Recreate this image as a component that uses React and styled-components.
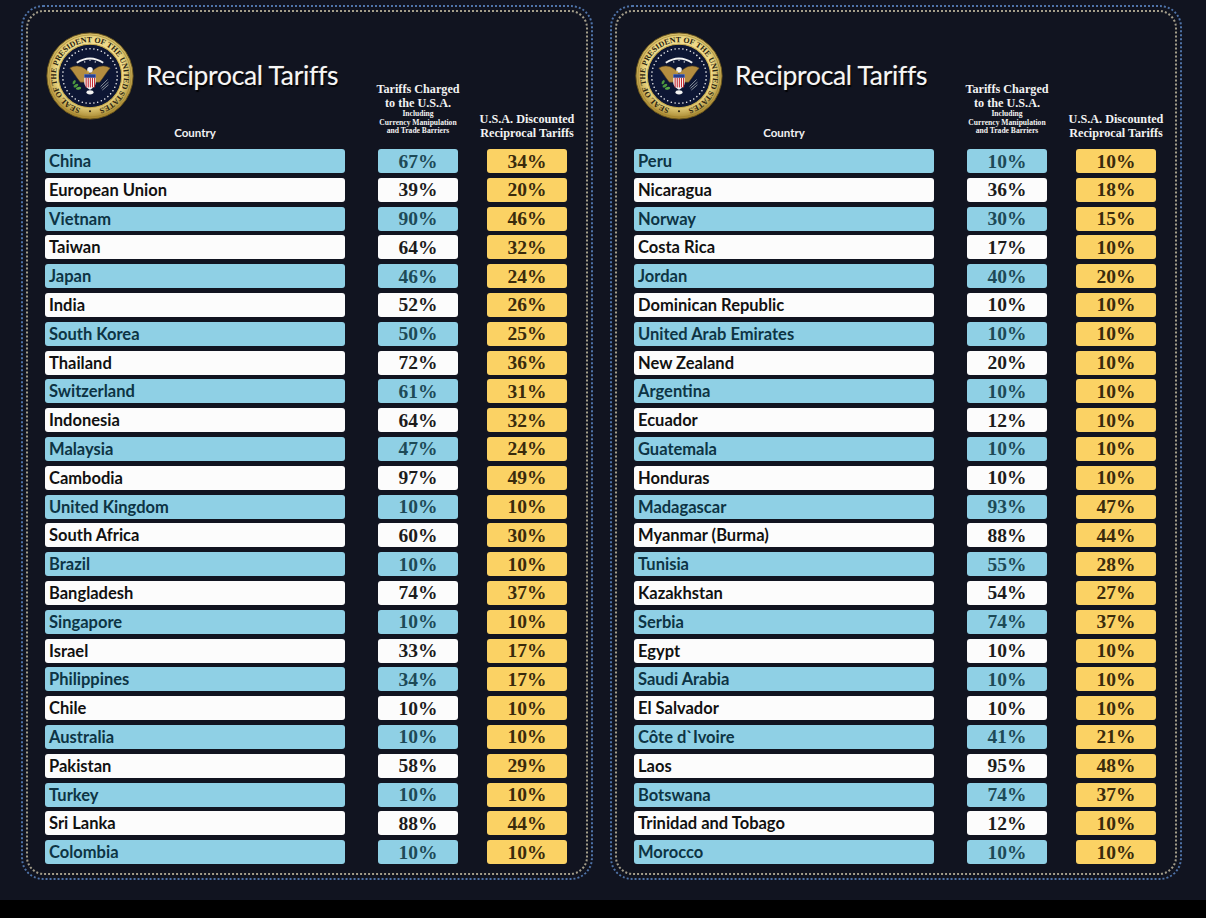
import styled, { createGlobalStyle } from "styled-components";

const GlobalStyle = createGlobalStyle`
    html, body {
        margin: 0;
        padding: 0;
        background: #000;
    }
    #root {
        width: 1206px;
        height: 918px;
    }
`;

const LEFT = [
    ["China", 67, 34],
    ["European Union", 39, 20],
    ["Vietnam", 90, 46],
    ["Taiwan", 64, 32],
    ["Japan", 46, 24],
    ["India", 52, 26],
    ["South Korea", 50, 25],
    ["Thailand", 72, 36],
    ["Switzerland", 61, 31],
    ["Indonesia", 64, 32],
    ["Malaysia", 47, 24],
    ["Cambodia", 97, 49],
    ["United Kingdom", 10, 10],
    ["South Africa", 60, 30],
    ["Brazil", 10, 10],
    ["Bangladesh", 74, 37],
    ["Singapore", 10, 10],
    ["Israel", 33, 17],
    ["Philippines", 34, 17],
    ["Chile", 10, 10],
    ["Australia", 10, 10],
    ["Pakistan", 58, 29],
    ["Turkey", 10, 10],
    ["Sri Lanka", 88, 44],
    ["Colombia", 10, 10],
];

const RIGHT = [
    ["Peru", 10, 10],
    ["Nicaragua", 36, 18],
    ["Norway", 30, 15],
    ["Costa Rica", 17, 10],
    ["Jordan", 40, 20],
    ["Dominican Republic", 10, 10],
    ["United Arab Emirates", 10, 10],
    ["New Zealand", 20, 10],
    ["Argentina", 10, 10],
    ["Ecuador", 12, 10],
    ["Guatemala", 10, 10],
    ["Honduras", 10, 10],
    ["Madagascar", 93, 47],
    ["Myanmar (Burma)", 88, 44],
    ["Tunisia", 55, 28],
    ["Kazakhstan", 54, 27],
    ["Serbia", 74, 37],
    ["Egypt", 10, 10],
    ["Saudi Arabia", 10, 10],
    ["El Salvador", 10, 10],
    ["Côte d`Ivoire", 41, 21],
    ["Laos", 95, 48],
    ["Botswana", 74, 37],
    ["Trinidad and Tobago", 12, 10],
    ["Morocco", 10, 10],
];

function Seal({ id }) {
    const dots = Array.from({ length: 44 }, (_, i) => {
        const a = (i / 44) * Math.PI * 2;
        return (
            <circle
                key={i}
                cx={50 + 31 * Math.cos(a)}
                cy={50 + 31 * Math.sin(a)}
                r="0.9"
                fill="#f4f4f4"
            />
        );
    });

    return (
        <SealSvg width="88" height="88" viewBox="0 0 100 100">
            <defs>
                <radialGradient id={`gold-${id}`} cx="50%" cy="45%" r="55%">
                    <stop offset="0%" stopColor="#fff6cc" />
                    <stop offset="72%" stopColor="#ecd784" />
                    <stop offset="100%" stopColor="#a3822a" />
                </radialGradient>
                <path
                    id={`ring-${id}`}
                    d="M50,88.5 A38.5,38.5 0 0,1 50,11.5 A38.5,38.5 0 0,1 50,88.5"
                />
            </defs>
            <circle cx="50" cy="50" r="49" fill={`url(#gold-${id})`} stroke="#6f5a1e" strokeWidth="1" />
            <circle cx="50" cy="50" r="46.6" fill="none" stroke="#9a7d2c" strokeWidth="0.6" />
            <text fontFamily="'Liberation Serif', serif" fontWeight="bold" fontSize="9" fill="#2b2410">
                <textPath href={`#ring-${id}`} startOffset="11" textLength="220" lengthAdjust="spacing">
                    SEAL OF THE PRESIDENT OF THE UNITED STATES
                </textPath>
            </text>
            <circle cx="50" cy="90" r="1.2" fill="#2b2410" />
            <circle cx="50" cy="50" r="36" fill="#0d1634" stroke="#c9ad4f" strokeWidth="1.2" />
            {dots}
            <path d="M35 35 Q50 25 65 35" stroke="#f2f2f2" strokeWidth="2.2" fill="none" />
            <circle cx="44" cy="34" r="0.8" fill="#fff" />
            <circle cx="50" cy="32" r="0.8" fill="#fff" />
            <circle cx="56" cy="34" r="0.8" fill="#fff" />
            <path d="M50 47 C43 39 35 36 27 41 C31 45 34 51 39 57 L45 57 Z" fill="#b48d40" stroke="#5a4318" strokeWidth="0.6" />
            <path d="M50 47 C57 39 65 36 73 41 C69 45 66 51 61 57 L55 57 Z" fill="#b48d40" stroke="#5a4318" strokeWidth="0.6" />
            <circle cx="50" cy="43" r="3.2" fill="#f2f2f2" />
            <path d="M48 44 L46 46 L49 45.5 Z" fill="#e8c040" />
            <path d="M43.5 48 H56.5 V57 C56.5 61.5 53 64 50 65.5 C47 64 43.5 61.5 43.5 57 Z" fill="#f6f6f6" />
            <rect x="43.5" y="48" width="13" height="4" fill="#233f92" />
            {[45, 47.4, 49.8, 52.2, 54.6].map((x) => (
                <rect key={x} x={x} y="52" width="1.2" height="11" fill="#c42a30" />
            ))}
            <ellipse cx="34" cy="61" rx="3" ry="1.6" fill="#4d9a3e" transform="rotate(-30 34 61)" />
            <ellipse cx="37" cy="64" rx="3" ry="1.6" fill="#5aa845" transform="rotate(-10 37 64)" />
            <ellipse cx="32" cy="57" rx="2.6" ry="1.4" fill="#4d9a3e" transform="rotate(-60 32 57)" />
            <path d="M62 62 L70 54 M63 64 L71 57 M64 66 L71 60" stroke="#9aa0a8" strokeWidth="1" />
            <ellipse cx="50" cy="68.5" rx="4" ry="2.4" fill="#f2f2f2" />
        </SealSvg>
    );
}

function Panel({ id, rows }) {
    return (
        <OuterFrame>
            <InnerFrame>
                <Table>
                    <CountryHead>
                        <Brand>
                            <Seal id={id} />
                            <Title>Reciprocal Tariffs</Title>
                        </Brand>
                        <HeadLabel>Country</HeadLabel>
                    </CountryHead>
                    <ColHead $lift={4}>
                        <HeadLine>Tariffs Charged</HeadLine>
                        <HeadLine>to the U.S.A.</HeadLine>
                        <SmallLine>Including</SmallLine>
                        <SmallLine>Currency Manipulation</SmallLine>
                        <SmallLine>and Trade Barriers</SmallLine>
                    </ColHead>
                    <ColHead $lift={0}>
                        <HeadLine>U.S.A. Discounted</HeadLine>
                        <HeadLine>Reciprocal Tariffs</HeadLine>
                    </ColHead>

                    {rows.map(([name, charged, discounted], i) => (
                        <Row key={name}>
                            <CountryBar $blue={i % 2 === 0}>{name}</CountryBar>
                            <PctBar $tone={i % 2 === 0 ? "blue" : "white"}>{charged}%</PctBar>
                            <PctBar $tone="yellow">{discounted}%</PctBar>
                        </Row>
                    ))}
                </Table>
            </InnerFrame>
        </OuterFrame>
    );
}

export default function App() {
    return (
        <Page>
            <GlobalStyle />
            <Stage>
                <Panel id="a" rows={LEFT} />
                <Panel id="b" rows={RIGHT} />
            </Stage>
            <Footer />
        </Page>
    );
}

const Page = styled.div`
    width: 1206px;
    height: 918px;
    display: flex;
    flex-direction: column;
    background: #000;
`;

const Stage = styled.div`
    height: 900px;
    background: #111420;
    display: flex;
    gap: 17px;
    padding: 5px 0 0 21px;
    box-sizing: border-box;
`;

const Footer = styled.div`
    flex: 1;
    background: #000;
`;

const OuterFrame = styled.div`
    width: 572px;
    height: 875px;
    box-sizing: border-box;
    border: 2px dotted #4f73a8;
    border-radius: 22px;
    padding: 3px;
`;

const InnerFrame = styled.div`
    height: 100%;
    box-sizing: border-box;
    border: 2px dotted #a39d8a;
    border-radius: 18px;
    padding: 20px 0 0 17px;
`;

const Table = styled.div`
    display: grid;
    grid-template-columns: 300px 113px 109px;
    align-items: end;
`;

const Row = styled.div`
    display: contents;
`;

const CountryHead = styled.div`
    display: flex;
    flex-direction: column;
    align-items: stretch;
    margin-bottom: 9px;
`;

const Brand = styled.div`
    display: flex;
    align-items: center;
    gap: 12px;
    padding-left: 1px;
`;

const SealSvg = styled.svg`
    flex-shrink: 0;
    display: block;
`;

const Title = styled.div`
    white-space: nowrap;
    font-family: Lato, "Open Sans", sans-serif;
    font-size: 26.5px;
    color: #f6f6f6;
    letter-spacing: -0.3px;
    text-shadow: 1px 2px 1px rgba(0, 0, 0, 0.9), 0 0 1px #888;
    margin-top: -2px;
`;

const HeadLabel = styled.div`
    margin-top: 6px;
    text-align: center;
    font-family: Lato, "Open Sans", sans-serif;
    font-weight: 700;
    font-size: 11.5px;
    line-height: 14px;
    color: #f2f2f2;
`;

const ColHead = styled.div`
    justify-self: end;
    width: 80px;
    display: flex;
    flex-direction: column;
    align-items: center;
    margin-bottom: ${(p) => 9 + p.$lift}px;
    white-space: nowrap;
    color: #f2f2f2;
    font-family: "Liberation Serif", serif;
    font-weight: 700;
`;

const HeadLine = styled.div`
    font-size: 12.2px;
    line-height: 13.5px;
`;

const SmallLine = styled.div`
    font-size: 7.6px;
    line-height: 8.6px;
`;

const CountryBar = styled.div`
    height: 24px;
    margin-bottom: 4.8px;
    box-sizing: border-box;
    border-radius: 3px;
    padding: 0 4px;
    display: flex;
    align-items: center;
    background: ${(p) => (p.$blue ? "#8fd0e5" : "#fcfcfc")};
    color: ${(p) => (p.$blue ? "#0d3444" : "#111")};
    font-family: Lato, "Open Sans", sans-serif;
    font-weight: 700;
    font-size: 16.5px;
`;

const toneBg = { blue: "#8fd0e5", white: "#fcfcfc", yellow: "#fbd264" };
const toneFg = { blue: "#1d4a57", white: "#1c1c1c", yellow: "#3a2b0c" };

const PctBar = styled.div`
    justify-self: end;
    width: 80px;
    height: 24px;
    margin-bottom: 4.8px;
    box-sizing: border-box;
    border-radius: 3px;
    display: flex;
    align-items: center;
    justify-content: center;
    background: ${(p) => toneBg[p.$tone]};
    color: ${(p) => toneFg[p.$tone]};
    font-family: "Liberation Serif", serif;
    font-weight: 700;
    font-size: 19.5px;
    padding-top: 1px;
`;
